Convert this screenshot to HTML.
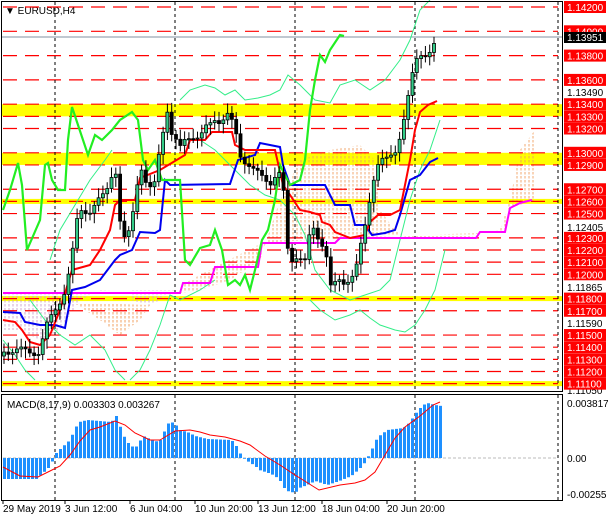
<!DOCTYPE html>
<html><head><meta charset="utf-8"><style>
html,body{margin:0;padding:0;background:#fff;width:608px;height:521px;overflow:hidden}
svg{display:block}
text{font-family:"Liberation Sans",sans-serif;font-size:10px}
</style></head><body>
<svg id="s" width="608" height="521" viewBox="0 0 608 521" xmlns="http://www.w3.org/2000/svg">
<defs>
<pattern id="po" width="4" height="4" patternUnits="userSpaceOnUse"><line x1="1" y1="0" x2="1" y2="2.5" stroke="#f0a060" stroke-width="1"/></pattern>
<pattern id="pp" width="4" height="4" patternUnits="userSpaceOnUse"><line x1="1" y1="0" x2="1" y2="2.5" stroke="#d0a8d0" stroke-width="1"/></pattern>
</defs>
<g id="bg"></g>
<text x="5" y="14" style="font-size:10px">▼ EURUSD,H4</text>
</svg>
<script>
const S=document.getElementById('s');const NS='http://www.w3.org/2000/svg';
function el(t,a,p){const e=document.createElementNS(NS,t);for(const k in a)e.setAttribute(k,a[k]);(p||S).appendChild(e);return e;}
const Y=p=>7+(1.1420-p)*12150;
// yellow bands
[[1.1340,1.1330],[1.1300,1.1290]].forEach(b=>el('rect',{x:2,y:Y(b[0]),width:560,height:Y(b[1])-Y(b[0]),fill:'#ffff00'}));
[1.1260,1.1180,1.1110].forEach(p=>el('rect',{x:2,y:Y(p)-2.5,width:560,height:5,fill:'#ffff00'}));
// cloud
el('polygon',{points:'3,330 20,330 40,340 60,330 80,300 100,290 150,292 180,293 180,293 3,293',fill:'url(#pp)'});
el('polygon',{points:'70,300 100,320 120,335 140,320 150,305 3,300',fill:'url(#po)'});
el('polygon',{points:'180,293 200,290 230,280 260,260 270,230 280,200 290,180 300,160 330,150 360,145 375,160 380,210 395,230 410,240 440,240 470,238 480,232 500,230 510,200 520,150 535,130 535,200 510,208 505,232 340,238 262,243 215,267 185,283',fill:'url(#po)',opacity:.9});
el('polygon',{points:'130,300 150,305 160,300 175,290 130,290',fill:'url(#pp)'});
// red dashed levels
const lv=[1.1420,1.1400,1.1380,1.1360,1.1340,1.1330,1.1320,1.1300,1.1290,1.1270,1.1260,1.1250,1.1230,1.1220,1.1210,1.1200,1.1180,1.1170,1.1150,1.1140,1.1130,1.1120,1.1110];
lv.forEach(p=>el('line',{x1:3,x2:558,y1:Y(p),y2:Y(p),stroke:'#ff0000','stroke-width':1.2,'stroke-dasharray':'14,8'}));
el('line',{x1:2,x2:562,y1:37,y2:37,stroke:'#8090a0','stroke-width':1});
// vertical dotted
[55,175,295,415,558].forEach(x=>{el('line',{x1:x,x2:x,y1:2,y2:391,stroke:'#000','stroke-dasharray':'3,3'});el('line',{x1:x,x2:x,y1:395,y2:500,stroke:'#000','stroke-dasharray':'3,3'});});
function pl(pts,c,w,extra){const a={points:pts.map(p=>p.join(',')).join(' '),fill:'none',stroke:c,'stroke-width':w};Object.assign(a,extra||{});el('polyline',a);}
// thin green bands
pl([[180,100],[190,90],[205,85],[215,88],[225,95],[235,90],[245,100],[258,98],[270,95],[280,90],[288,75],[300,85],[315,100],[330,103],[340,85],[355,80],[370,90],[385,80],[400,60],[410,40],[420,10],[430,0]],'#33ee88',1);
pl([[3,340],[15,355],[25,370],[35,380]],'#33ee88',1);
pl([[50,260],[60,230],[75,205],[90,180],[105,160],[112,150]],'#33ee88',1);
pl([[180,140],[200,140],[215,150],[225,160],[235,170],[250,185],[265,195],[280,200],[295,215],[305,235],[315,270],[330,290],[350,300],[365,295],[380,290],[390,280],[400,240],[410,200],[420,170],[430,150],[440,120]],'#33ee88',1);
pl([[30,300],[45,320],[60,335],[75,345],[90,335],[105,350],[115,370],[125,380]],'#33ee88',1);
pl([[310,300],[320,310],[335,320],[350,315],[360,310],[370,318],[380,325],[395,330],[405,332],[415,325],[425,310],[435,290],[445,250]],'#33ee88',1);
pl([[130,380],[140,370],[150,350],[160,325],[170,295],[180,300],[200,290],[215,280]],'#33ee88',1);
// magenta, blue, red, green
pl([[3,293],[180,293],[183,283],[210,283],[215,267],[258,267],[262,243],[335,243],[340,238],[476,238],[480,232],[505,232],[510,208],[520,203],[532,200]],'#ff00ff',2);
pl([[3,312],[20,313],[25,322],[40,325],[55,325],[65,328],[72,290],[85,287],[100,280],[115,260],[120,255],[132,250],[140,232],[155,233],[160,230],[165,180],[170,185],[230,184],[238,160],[255,155],[260,143],[280,147],[283,165],[290,185],[325,185],[335,205],[350,205],[355,225],[365,225],[372,235],[385,233],[395,230],[400,215],[410,180],[420,175],[430,162],[438,158]],'#0000ee',2);
pl([[3,320],[15,322],[22,330],[30,342],[40,345],[50,335],[60,310],[72,270],[90,265],[100,250],[110,230],[115,205],[120,200],[135,200],[140,178],[160,170],[185,155],[190,140],[205,140],[212,132],[232,132],[235,145],[245,150],[262,150],[275,150],[283,185],[290,195],[300,210],[310,212],[320,215],[322,222],[330,225],[335,232],[350,238],[365,235],[370,222],[378,215],[390,215],[400,210],[405,185],[410,160],[415,130],[420,112],[428,105],[437,101]],'#ff0000',2);
pl([[3,210],[10,190],[18,163],[22,185],[27,250],[40,220],[45,165],[48,163],[52,180],[58,190],[65,190],[68,140],[72,107],[78,125],[88,155],[95,135],[102,140],[112,130],[120,120],[132,112],[138,120],[143,160],[148,170],[155,160],[162,180],[180,180],[185,260],[190,265],[200,248],[210,245],[215,230],[222,250],[228,285],[235,280],[240,285],[245,275],[250,290],[255,270],[262,240],[268,230],[275,200],[280,165],[290,185],[300,180],[305,160],[310,110],[315,80],[320,55],[325,62],[330,50],[340,35],[344,36]],'#22ee22',2.2);
// candles
const P=[[3,350],[40,352],[45,330],[55,310],[65,290],[72,260],[75,230],[80,210],[90,210],[95,205],[100,200],[105,195],[110,180],[115,160],[118,200],[122,240],[127,240],[130,230],[135,200],[140,160],[145,180],[150,190],[155,185],[158,160],[163,130],[167,105],[170,130],[175,140],[180,150],[185,140],[190,135],[195,135],[200,138],[205,130],[210,125],[215,118],[220,120],[228,115],[235,130],[240,155],[245,160],[250,165],[255,172],[262,178],[270,182],[278,170],[283,185],[286,240],[290,265],[295,255],[300,255],[305,260],[310,235],[315,230],[320,245],[325,240],[330,285],[335,285],[340,283],[345,285],[350,275],[355,270],[360,250],[365,230],[370,200],[375,170],[380,155],[385,160],[390,160],[395,155],[400,135],[405,110],[410,85],[415,65],[420,58],[425,55],[430,48],[435,40],[438,37]];
function iy(x){for(let i=1;i<P.length;i++){if(x<=P[i][0]){const a=P[i-1],b=P[i];return a[1]+(b[1]-a[1])*(x-a[0])/(b[0]-a[0]);}}return P[P.length-1][1];}
let prev=iy(3)+6;
for(let x=4;x<=438;x+=4.3){let c=iy(x)+((Math.sin(x*1.7)*4));let o=prev;const top=Math.min(o,c),bot=Math.max(o,c);
el('line',{x1:x,x2:x,y1:top-4-Math.abs(Math.sin(x))*6,y2:bot+4+Math.abs(Math.cos(x))*6,stroke:'#000','stroke-width':1});
el('rect',{x:x-1.5,y:top,width:3,height:Math.max(1,bot-top),fill:c<o?'#33cc88':'#000',stroke:'#000','stroke-width':0.8});prev=c;}
// frames
el('rect',{x:1.5,y:1.5,width:561,height:390,fill:'none',stroke:'#000','stroke-width':1});
el('rect',{x:1.5,y:394.5,width:561,height:106,fill:'none',stroke:'#000','stroke-width':1});
// right labels
const lab=[['1.14200',1.1420],['1.14000',1.1400],['1.13800',1.1380],['1.13600',1.1360],['1.13400',1.1340],['1.13300',1.1330],['1.13200',1.1320],['1.13000',1.1300],['1.12900',1.1290],['1.12700',1.1270],['1.12600',1.1260],['1.12500',1.1250],['1.12300',1.1230],['1.12200',1.1220],['1.12100',1.1210],['1.12000',1.1200],['1.11800',1.1180],['1.11700',1.1170],['1.11500',1.1150],['1.11400',1.1140],['1.11300',1.1130],['1.11200',1.1120],['1.11100',1.1110]];
[['1.13490',92],['1.12405',227],['1.11865',287],['1.11590',323],['1.11050',390]].forEach(l=>el('text',{x:567,y:l[1]+4}).textContent=l[0]);
lab.forEach(l=>{const y=Y(l[1]);el('rect',{x:564,y:y-6,width:42,height:12,fill:'#ff0000'});const t=el('text',{x:567,y:y+4,fill:'#fff'});t.textContent=l[0];});
el('rect',{x:564,y:32,width:42,height:11,fill:'#000'});el('text',{x:567,y:41,fill:'#fff'}).textContent='1.13951';
// MACD
el('line',{x1:3,x2:558,y1:458,y2:458,stroke:'#bbb','stroke-dasharray':'3,2'});
const H=[[3,479],[35,479],[45,470],[50,465],[52,458],[55,453],[58,450],[62,446],[66,443],[70,437],[74,428],[78,422],[86,420],[110,422],[115,416],[118,424],[122,435],[126,442],[130,446],[134,448],[138,442],[142,436],[146,438],[154,441],[158,442],[162,434],[166,424],[170,422],[174,424],[178,430],[186,432],[194,436],[206,439],[230,440],[234,444],[238,452],[242,458],[246,461],[254,466],[258,470],[270,474],[278,479],[282,487],[286,491],[294,493],[298,488],[306,485],[314,481],[326,485],[338,481],[350,476],[358,469],[362,465],[366,458],[370,451],[374,441],[378,436],[386,430],[402,428],[406,425],[410,420],[414,414],[418,409],[422,405],[426,403],[434,405],[440,406]];
function hy(x){for(let i=1;i<H.length;i++){if(x<=H[i][0]){const a=H[i-1],b=H[i];return a[1]+(b[1]-a[1])*(x-a[0])/(b[0]-a[0]);}}return 406;}
for(let x=3;x<=440;x+=4){const y=hy(x);el('rect',{x:x,y:Math.min(y,458),width:3,height:Math.abs(y-458)||0.5,fill:'#1e90ff'});}
pl([[3,467],[20,476],[38,477],[50,471],[60,466],[70,455],[80,441],[90,430],[100,427],[115,421],[125,425],[135,433],[150,440],[160,440],[175,431],[190,430],[200,432],[210,435],[225,437],[240,441],[250,445],[265,456],[280,465],[295,475],[319,490],[340,485],[355,483],[365,480],[375,472],[385,455],[395,438],[405,427],[420,416],[433,405],[440,402]],'#ff0000',1);
el('text',{x:7,y:408}).textContent='MACD(8,17,9) 0.003303 0.003267';
[['0.003817',407],['0.00',462],['-0.00255',498]].forEach(l=>el('text',{x:567,y:l[1]}).textContent=l[0]);
[['29 May 2019',3],['3 Jun 12:00',65],['6 Jun 04:00',130],['10 Jun 20:00',195],['13 Jun 12:00',258],['18 Jun 04:00',322],['20 Jun 20:00',387]].forEach(l=>{el('text',{x:l[1],y:512}).textContent=l[0];el('line',{x1:l[1],x2:l[1],y1:500,y2:504,stroke:'#000'});});
</script>
</body></html>
